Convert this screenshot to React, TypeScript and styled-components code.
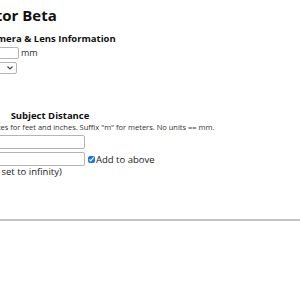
import React from 'react';
import styled, { createGlobalStyle } from 'styled-components';

const GlobalStyle = createGlobalStyle`
    html, body {
        margin: 0;
        padding: 0;
        background: #fff;
        overflow: hidden;
    }
    body {
        font-family: "Open Sans", "Noto Sans", sans-serif;
        color: #111;
    }
`;

const Page = styled.div`
    width: 300px;
    height: 300px;
    overflow: hidden;
`;

// the page is scrolled sideways, so the left part of the column is off screen
const Content = styled.div`
    margin-left: -60px;
    padding-top: 6px;
`;

const Title = styled.h1<{ $shift?: number }>`
    font-size: 15px;
    font-weight: 700;
    margin: 0 0 0 ${props => props.$shift || 0}px;
    line-height: 18px;
    white-space: nowrap;
`;

const Section = styled.div<{ $top: number }>`
    margin-top: ${props => props.$top}px;
`;

const Heading = styled.h2<{ $shift?: number }>`
    font-size: 9.5px;
    font-weight: 700;
    margin: 0 0 1px ${props => props.$shift || 0}px;
    line-height: 13px;
    white-space: nowrap;
`;

const CenterHeading = styled.h2`
    font-size: 9.5px;
    font-weight: 700;
    margin: 0;
    line-height: 13px;
    text-align: center;
    width: 220px;
`;

const Row = styled.div<{ $h?: number; $gap?: number }>`
    display: flex;
    align-items: center;
    gap: 2px;
    height: ${props => props.$h || 13}px;
    margin-bottom: ${props => props.$gap ?? 2}px;
    white-space: nowrap;
`;

const TextInput = styled.input<{ $w: number; $h?: number }>`
    box-sizing: border-box;
    width: ${props => props.$w}px;
    height: ${props => props.$h || 12}px;
    border: 1px solid #b5b5b5;
    border-radius: 2px;
    padding: 0 2px;
    font: inherit;
    font-size: 9px;
    background: #fff;
    outline: none;
`;

const Unit = styled.span`
    font-size: 9px;
    color: #333;
`;

const SelectBox = styled.div`
    box-sizing: border-box;
    width: 77px;
    height: 12px;
    border: 1px solid #b5b5b5;
    border-radius: 2px;
    display: flex;
    align-items: center;
    justify-content: flex-end;
    padding-right: 3px;
`;

const Chevron = () => (
    <svg width="6" height="4" viewBox="0 0 6 4">
        <path d="M0.5 0.5 L3 3 L5.5 0.5" fill="none" stroke="#444" strokeWidth="1.1" />
    </svg>
);

const Hint = styled.div<{ $shift?: number }>`
    font-size: 7.5px;
    color: #333;
    line-height: 10px;
    white-space: nowrap;
    margin: 0 0 3px ${props => props.$shift || 0}px;
`;

const Check = styled.input`
    width: 7px;
    height: 7px;
    margin: 0 1px;
    accent-color: #1a73e8;
`;

const CheckLabel = styled.label`
    display: flex;
    align-items: center;
    font-size: 9.5px;
    color: #222;
`;

const Note = styled.div<{ $shift?: number }>`
    font-size: 9.5px;
    color: #222;
    margin-left: ${props => props.$shift || 0}px;
    line-height: 12px;
    white-space: nowrap;
`;

const Rule = styled.hr`
    margin: 41px 0 0 60px;
    border: none;
    border-top: 2px solid #c4c4c4;
    width: 300px;
`;

export default function App() {
    return (
        <Page>
            <GlobalStyle />
            <Content>
                <Title $shift={-107}>Depth of Field Calculator Beta</Title>
                <Section $top={8}>
                    <Heading $shift={45}>Camera &amp; Lens Information</Heading>
                    <Row>
                        <TextInput $w={79} />
                        <Unit>mm</Unit>
                    </Row>
                    <Row>
                        <SelectBox><Chevron /></SelectBox>
                    </Row>
                </Section>
                <Section $top={35}>
                    <CenterHeading>Subject Distance</CenterHeading>
                    <Hint $shift={29}>Use quotes for feet and inches. Suffix "m" for meters. No units == mm.</Hint>
                    <Row $h={14} $gap={3}>
                        <TextInput $w={145} $h={14} />
                    </Row>
                    <Row $h={14} $gap={0}>
                        <TextInput $w={145} $h={14} />
                        <CheckLabel><Check type="checkbox" defaultChecked />Add to above</CheckLabel>
                    </Row>
                    <Note $shift={24}>(blank = set to infinity)</Note>
                </Section>
                <Rule />
            </Content>
        </Page>
    );
}
